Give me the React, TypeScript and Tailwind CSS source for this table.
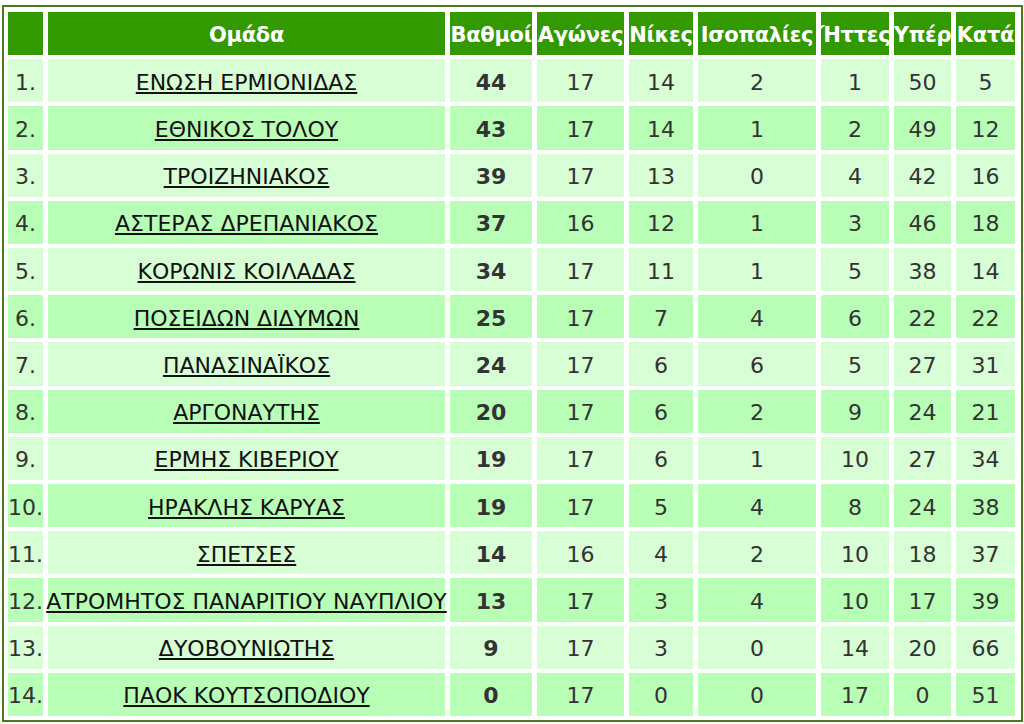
import React from "react";

const headers = ["", "Ομάδα", "Βαθμοί", "Αγώνες", "Νίκες", "Ισοπαλίες", "Ήττες", "Υπέρ", "Κατά"];

const rows: [string, number, number, number, number, number, number, number][] = [
  ["ΕΝΩΣΗ ΕΡΜΙΟΝΙΔΑΣ", 44, 17, 14, 2, 1, 50, 5],
  ["ΕΘΝΙΚΟΣ ΤΟΛΟΥ", 43, 17, 14, 1, 2, 49, 12],
  ["ΤΡΟΙΖΗΝΙΑΚΟΣ", 39, 17, 13, 0, 4, 42, 16],
  ["ΑΣΤΕΡΑΣ ΔΡΕΠΑΝΙΑΚΟΣ", 37, 16, 12, 1, 3, 46, 18],
  ["ΚΟΡΩΝΙΣ ΚΟΙΛΑΔΑΣ", 34, 17, 11, 1, 5, 38, 14],
  ["ΠΟΣΕΙΔΩΝ ΔΙΔΥΜΩΝ", 25, 17, 7, 4, 6, 22, 22],
  ["ΠΑΝΑΣΙΝΑΪΚΟΣ", 24, 17, 6, 6, 5, 27, 31],
  ["ΑΡΓΟΝΑΥΤΗΣ", 20, 17, 6, 2, 9, 24, 21],
  ["ΕΡΜΗΣ ΚΙΒΕΡΙΟΥ", 19, 17, 6, 1, 10, 27, 34],
  ["ΗΡΑΚΛΗΣ ΚΑΡΥΑΣ", 19, 17, 5, 4, 8, 24, 38],
  ["ΣΠΕΤΣΕΣ", 14, 16, 4, 2, 10, 18, 37],
  ["ΑΤΡΟΜΗΤΟΣ ΠΑΝΑΡΙΤΙΟΥ ΝΑΥΠΛΙΟΥ", 13, 17, 3, 4, 10, 17, 39],
  ["ΔΥΟΒΟΥΝΙΩΤΗΣ", 9, 17, 3, 0, 14, 20, 66],
  ["ΠΑΟΚ ΚΟΥΤΣΟΠΟΔΙΟΥ", 0, 17, 0, 0, 17, 0, 51],
];

export default function App() {
  return (
    <div className="w-[1024px] h-[724px] bg-white overflow-hidden" style={{ fontFamily: '"DejaVu Sans", Verdana, sans-serif' }}>
      <div className="ml-[2px] mt-[5px] w-[1021px] border-2 border-[#4b7a1c] px-[4px] pt-[5px] pb-[4px] bg-white">
        <div className="grid grid-cols-[35px_397px_82px_87px_64px_118px_68px_57px_59px] grid-rows-[repeat(15,minmax(0,1fr))] gap-x-[5px] gap-y-[4px] h-[704px]">
          {headers.map((h, i) => (
            <div key={"h" + i} className="bg-[#339900] text-white font-bold text-[21px] tracking-[-0.3px] pt-[4px] flex items-center justify-center whitespace-nowrap">
              {h}
            </div>
          ))}
          {rows.map((r, idx) => {
            const bg = idx % 2 === 0 ? "bg-[#d7fed4]" : "bg-[#b9feb6]";
            const cell = `${bg} flex items-center justify-center whitespace-nowrap pt-[3px] text-[22px] text-[#333333]`;
            return (
              <React.Fragment key={idx}>
                <div className={cell}>{idx + 1}.</div>
                <div className={cell}>
                  <a href="#" className="underline text-[#111111]">{r[0]}</a>
                </div>
                <div className={`${cell} font-bold`}>{r[1]}</div>
                <div className={cell}>{r[2]}</div>
                <div className={cell}>{r[3]}</div>
                <div className={cell}>{r[4]}</div>
                <div className={cell}>{r[5]}</div>
                <div className={cell}>{r[6]}</div>
                <div className={cell}>{r[7]}</div>
              </React.Fragment>
            );
          })}
        </div>
      </div>
    </div>
  );
}
